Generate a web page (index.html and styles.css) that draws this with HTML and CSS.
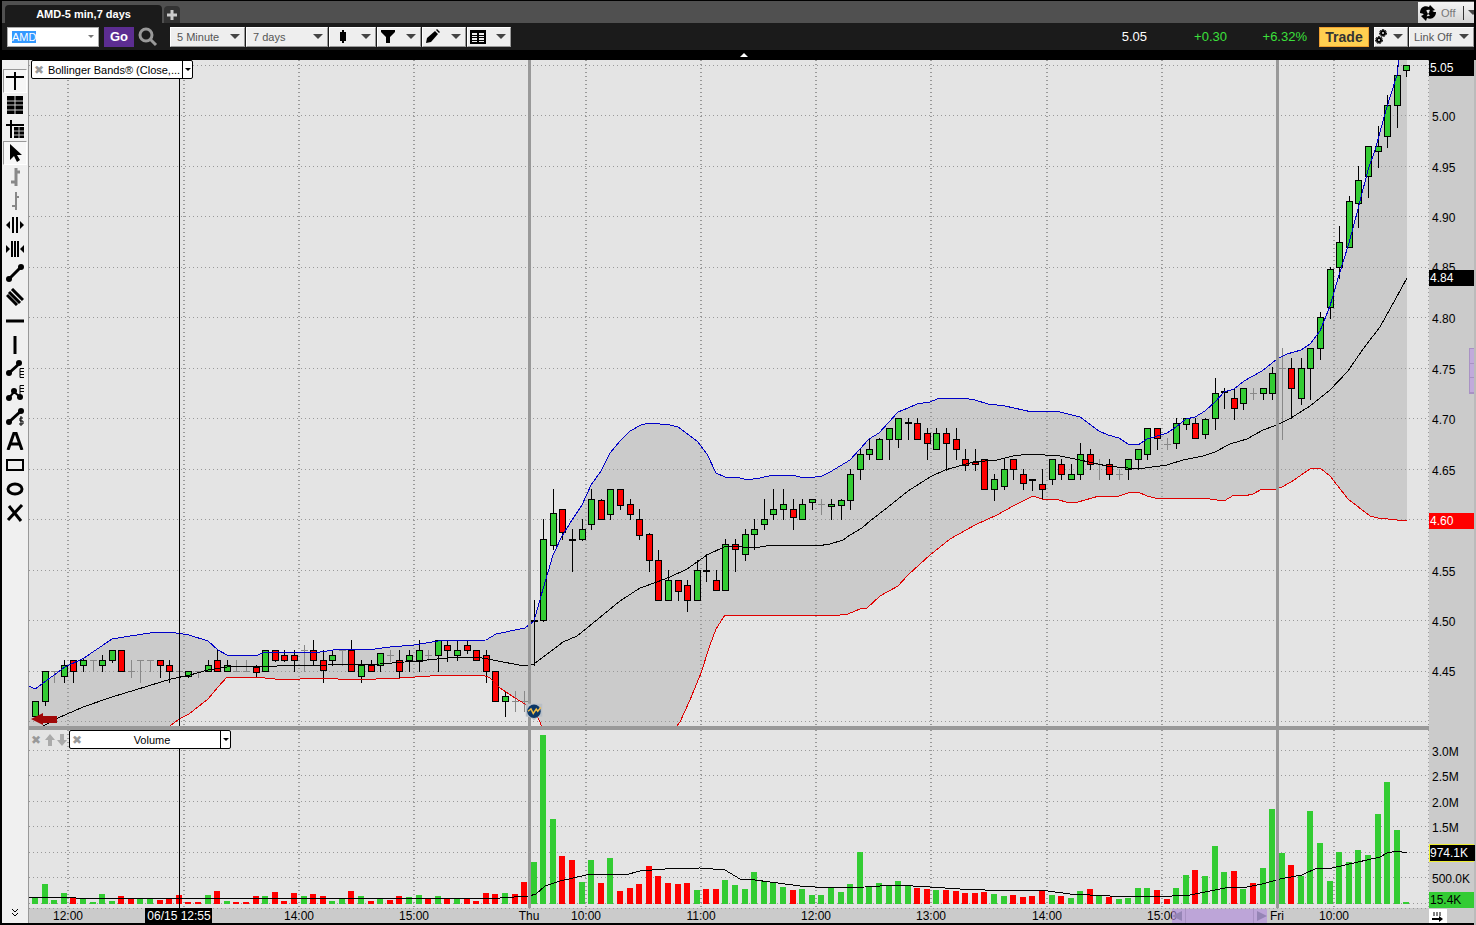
FILE: index.html
```html
<!DOCTYPE html>
<html lang="en">

<head>
    <meta charset="UTF-8">
    <meta name="viewport" content="width=device-width, initial-scale=1.0">
    <title>AMD-5 min,7 days</title>
    <link rel="stylesheet" href="styles.css">
</head>

<body>

    <header>
        <div class="tabs">
            <button class="tab">AMD-5 min,7 days</button>
            <button class="add-tab" aria-label="Add tab">
                <svg width="12" height="12"><path d="M6 1v10M1 6h10" stroke="#ccc" stroke-width="3"/></svg>
            </button>
            <button class="sync">
                <svg width="18" height="18" viewBox="0 0 18 18">
                    <path d="M1 9C1 4 5 1 10 3l1-2 5 5-6 2 1-2C8 5 6 7 5 10z"/>
                    <path d="M17 8c0 5-4 8-9 6l-1 3-5-5 6-3-1 3c3 1 5-1 6-4z"/>
                    <path d="M4 10l3-4 2 4 3-4 3 2-3 4-3-2-2 3z"/>
                </svg>
                <span>Off</span>
                <i></i>
                <b class="arrow"></b>
            </button>
        </div>

        <div class="toolbar">
            <div class="symbol">
                <input id="symbol" type="text" value="AMD" aria-label="Symbol">
                <b class="arrow small"></b>
            </div>
            <button class="go">Go</button>
            <button class="search" aria-label="Search">
                <svg width="20" height="20"><circle cx="8" cy="8" r="6" fill="none" stroke="#999" stroke-width="3"/><path d="M12 12l6 6" stroke="#999" stroke-width="3"/></svg>
            </button>

            <div class="picker interval">
                <select aria-label="Interval"><option>5 Minute</option></select>
                <b class="arrow"></b>
            </div>
            <div class="picker period">
                <select aria-label="Period"><option>7 days</option></select>
                <b class="arrow"></b>
            </div>
            <button class="tool wide" aria-label="Chart type">
                <svg width="16" height="16"><path d="M8 1v13" stroke="#000" stroke-width="2"/><path d="M5 3h6v9H5z"/></svg>
                <b class="arrow"></b>
            </button>
            <button class="tool" aria-label="Studies">
                <svg width="16" height="16"><path d="M1 1h14v2l-5 5v6H6V8L1 3z"/></svg>
                <b class="arrow"></b>
            </button>
            <button class="tool" aria-label="Draw">
                <svg width="16" height="16"><path d="M1 14l1-5 8-7 3 3-7 8zM11 1l1-1 3 3-1 1z"/></svg>
                <b class="arrow"></b>
            </button>
            <button class="tool" aria-label="Table view">
                <svg width="16" height="16"><path d="M0 1h16v14H0z"/><path d="M2 4h5v2H2zM9 4h5v2H9zM2 7h5v1H2zM9 7h5v1H9zM2 9h5v2H2zM9 9h5v2H9zM2 12h5v1H2zM9 12h5v1H9z" fill="#eee"/></svg>
                <b class="arrow"></b>
            </button>

            <div class="quote">
                <span class="last">5.05</span>
                <span class="up">+0.30</span>
                <span class="up">+6.32%</span>
            </div>
            <button class="trade">Trade</button>
            <button class="tool gear" aria-label="Settings">
                <svg width="14" height="16">
                    <g fill="none" stroke="#000"><circle cx="8" cy="4" r="2" stroke-width="2"/><circle cx="8" cy="4" r="3.500" stroke-dasharray="2 1"/>
                    <circle cx="4" cy="11" r="2" stroke-width="2"/><circle cx="4" cy="11" r="3.500" stroke-dasharray="2 1"/></g>
                </svg>
                <b class="arrow"></b>
            </button>
            <div class="picker link">
                <select aria-label="Link"><option>Link Off</option></select>
                <b class="arrow"></b>
            </div>
        </div>
        <button class="collapse" aria-label="Collapse"></button>
    </header>

    <main>
        <nav class="tools" id="tools"></nav>

        <section class="plot">
            <div class="pane price">
                <svg id="price" viewBox="29 60 1400 666" preserveAspectRatio="none"></svg>
                <div class="study">
                    <button class="close" aria-label="Remove study">✖</button>
                    <span>Bollinger Bands® (Close,...</span>
                    <button class="more" aria-label="Study options"></button>
                </div>
                <svg class="event" viewBox="0 0 24 24">
                    <path d="M1 1h22v17l-6 1-5 4-5-4-6-1z" fill="#b9bfc6"/>
                    <circle cx="12" cy="11" r="9" fill="#0c3767"/>
                    <path d="M4 11l4-3 3 6 4-6 2 3 4-5" fill="none" stroke="#f2bd45" stroke-width="2"/>
                </svg>
            </div>
            <div class="pane volume">
                <svg id="volume" viewBox="29 730 1400 178" preserveAspectRatio="none"></svg>
                <div class="pane-bar">
                    <button class="close" aria-label="Close pane">✖</button>
                    <button aria-label="Move up"><svg width="10" height="12"><path d="M5 0l5 6H7v6H3V6H0z" fill="#aaa"/></svg></button>
                    <button aria-label="Move down"><svg width="10" height="12"><path d="M5 12l5-6H7V0H3v6H0z" fill="#aaa"/></svg></button>
                    <div class="study">
                        <button class="close" aria-label="Remove study">✖</button>
                        <span>Volume</span>
                        <button class="more" aria-label="Study options"></button>
                    </div>
                </div>
            </div>
            <div class="times">
                <svg id="times"></svg>
                <div class="scroller"><b></b><i></i><b></b></div>
            </div>
        </section>

        <aside class="axis">
            <svg id="prices"></svg>
            <svg id="volumes"></svg>
            <div class="zoomer"><i></i><i></i><i></i></div>
            <button class="jump" aria-label="Jump to latest">
                <svg width="18" height="14"><path d="M5 3v4M8 3v4M11 3v4" stroke="#000"/><path d="M3 10h8" stroke="#000" stroke-width="2"/><path d="M10 7l4 3-4 3z"/></svg>
            </button>
        </aside>
    </main>

    <script src="chart.js"></script>

</body>

</html>
```
FILE: styles.css
```css
body {
    font-family: 'Liberation Sans', Arial, sans-serif;
    font-size: 11px;
    margin: 0;
    height: 100vh;
    display: flex;
    flex-direction: column;
    background-color: #000;
    overflow: hidden;
}

* {
    box-sizing: border-box;
}

button,
select,
input {
    font: inherit;
    color: inherit;
    margin: 0;
    padding: 0;
    border: none;
    border-radius: 0;
    background: none;
    appearance: none;
}

svg {
    display: block;
}

header {
    display: flex;
    flex-direction: column;
    height: 60px;
    padding: 1px 2px 0;
}

.tabs {
    display: flex;
    align-items: flex-end;
    height: 22px;
    padding-left: 3px;
    background-color: #505050;
}

.tab {
    width: 157px;
    height: 18px;
    border-radius: 4px 4px 0 0;
    background-color: #1b1b1b;
    color: #fff;
    font-weight: bold;
}

.add-tab {
    display: flex;
    align-items: center;
    justify-content: center;
    width: 16px;
    height: 17px;
    margin-left: 2px;
    border-radius: 4px 4px 0 0;
    background-color: #333;
}

.sync {
    display: flex;
    align-items: center;
    gap: 4px;
    width: 56px;
    height: 21px;
    margin-left: auto;
    padding-left: 1px;
    background-image: linear-gradient(#f4f4f4, #d4d4d4);
    color: #777;
    overflow: hidden;
}

.sync svg {
    flex: none;
}

.sync i {
    flex: none;
    width: 1px;
    height: 14px;
    margin-left: 4px;
    background-color: #333;
}

.arrow {
    flex: none;
    border: 5px solid transparent;
    border-top-color: #444;
    border-bottom: none;
    pointer-events: none;
}

.arrow.small {
    border-width: 3px;
    border-bottom: none;
    border-top-color: #777;
}

.toolbar {
    display: flex;
    align-items: center;
    height: 27px;
    padding-left: 5px;
    background-color: #1b1b1b;
}

.symbol {
    display: flex;
    align-items: center;
    width: 92px;
    height: 20px;
    padding: 0 4px;
    border: 1px solid #aaa;
    background-color: #fff;
}

.symbol input {
    flex: 1;
    min-width: 0;
    outline: none;
    font-size: 11px;
}

.symbol input::selection {
    background-color: #3399ff;
    color: #fff;
}

.go {
    width: 30px;
    height: 20px;
    margin-left: 5px;
    background-color: #5c2d91;
    color: #fff;
    font-size: 13px;
    font-weight: bold;
}

.search {
    margin: 0 12px 0 4px;
}

.picker,
.tool {
    display: flex;
    align-items: center;
    height: 20px;
    margin-right: 1px;
    padding: 0 4px 0 6px;
    border: 1px solid #fff;
    border-right-color: #999;
    border-bottom-color: #999;
    background-color: #eee;
    color: #555;
}

.picker select {
    flex: 1;
    width: 100%;
    min-width: 0;
}

.interval {
    width: 75px;
}

.period {
    width: 82px;
}

.tool {
    justify-content: space-between;
    width: 44px;
    padding-left: 2px;
}

.tool.wide {
    width: 47px;
    padding-left: 5px;
}

.tool.gear {
    width: 34px;
    margin-left: 5px;
    padding-left: 0;
}

.link {
    width: 65px;
    margin-right: 0;
    padding-left: 4px;
}

.quote {
    display: flex;
    justify-content: flex-end;
    flex: 1;
    color: #3ce03c;
    font-size: 13px;
}

.quote span {
    width: 80px;
    text-align: right;
}

.quote .last {
    color: #fff;
}

.trade {
    width: 50px;
    height: 20px;
    margin-left: 12px;
    border: 1px solid #f0a030;
    background-color: #ffcf50;
    color: #333;
    font-size: 14px;
    font-weight: bold;
}

.tabs,
.toolbar {
    flex: none;
}

.collapse {
    align-self: center;
    margin: 3px 0 0 12px;
    border: 4px solid transparent;
    border-top: none;
    border-bottom-color: #fff;
}

main {
    flex: 1;
    min-height: 0;
    display: grid;
    grid-template-columns: 27px 1fr 45px;
    padding: 0 0 2px 2px;
    border-right: 2px solid #bbb;
}

.tools {
    display: flex;
    flex-direction: column;
    padding-top: 9px;
    border-right: 1px solid #999;
    background-color: #f0f0f0;
}

.tools button {
    display: flex;
    align-items: center;
    justify-content: center;
    flex: none;
    height: 24px;
    margin: 0 1px;
    border: 1px solid transparent;
}

.tools button.on {
    border-color: #999 #fff #fff #999;
    background-color: #f7f7f7;
}

.tools .expand {
    height: 20px;
    margin-top: auto;
}

.plot {
    display: flex;
    flex-direction: column;
    min-width: 0;
}

.pane {
    position: relative;
    min-height: 0;
    overflow: hidden;
    background-color: #e4e4e4;
}

.pane > svg:first-child {
    width: 100%;
    height: 100%;
}

.price {
    flex: 666;
}

.volume {
    flex: 178;
    border-top: 4px solid #999;
    box-sizing: content-box;
}

.study {
    display: flex;
    align-items: center;
    width: 162px;
    height: 19px;
    border: 1px solid #000;
    border-radius: 2px;
    background-color: #fff;
    color: #000;
}

.study span {
    flex: 1;
    text-align: center;
    white-space: nowrap;
}

.price .study {
    position: absolute;
    left: 2px;
    top: 0;
}

.close {
    width: 14px;
    color: #999;
    font-family: 'DejaVu Sans', sans-serif;
    font-size: 12px;
}

.more {
    display: flex;
    align-items: center;
    justify-content: center;
    width: 10px;
    height: 100%;
    border-left: 1px solid #000;
}

.more::after {
    content: '';
    border: 3px solid transparent;
    border-top-color: #000;
    border-bottom: none;
}

.event {
    position: absolute;
    left: 36%;
    bottom: 4px;
    width: 18px;
    height: 20px;
    margin-left: -8px;
}

.pane-bar {
    position: absolute;
    left: 0;
    top: 0;
    display: flex;
    align-items: center;
    gap: 2px;
}

.times {
    position: relative;
    height: 15px;
    background-color: #cbcbcb;
}

.times > svg,
#prices,
#volumes {
    width: 100%;
    height: 100%;
    font-size: 12px;
}

.scroller {
    position: absolute;
    right: 162px;
    top: 1px;
    display: flex;
    align-items: center;
    width: 95px;
    height: 14px;
    background-color: rgba(180, 140, 225, 0.6);
}

.scroller i {
    flex: 1;
    height: 100%;
    margin: 0 3px;
    border: 1px solid #a992c4;
    border-width: 0 1px;
}

.scroller b {
    border: 5px solid transparent;
    border-right: 10px solid #9585b5;
    border-left: none;
}

.scroller b:last-child {
    border-right: none;
    border-left: 10px solid #9585b5;
}

.axis {
    position: relative;
    display: flex;
    flex-direction: column;
    min-height: 0;
    background-color: #cbcbcb;
}

#prices {
    flex: 666;
    min-height: 0;
}

#volumes {
    flex: 178;
    min-height: 0;
    margin-top: 4px;
    overflow: visible;
}

.zoomer {
    position: absolute;
    right: 0;
    top: 288px;
    display: flex;
    flex-direction: column;
    width: 5px;
    height: 46px;
    border: 1px solid #a992c4;
    border-right: none;
    background-color: #c1aadb;
}

.zoomer i {
    flex: 1;
    border-bottom: 1px solid #a992c4;
}

.jump {
    width: 18px;
    height: 14px;
    margin-top: 1px;
    background-color: #fff;
}

.grid-h {
    stroke: #999;
    stroke-dasharray: 1 3;
}

.grid-v {
    stroke: #999;
    stroke-dasharray: 1 3;
    stroke-width: 2;
}

.separator {
    stroke: #999;
    stroke-width: 3;
}

.cursor {
    stroke: #000;
}

.band {
    fill: #cbcbcb;
}

.line {
    fill: none;
    stroke: #000;
}

.upper {
    stroke: #0000c8;
}

.lower {
    stroke: #e00000;
}

.g {
    fill: #33cc33;
}

.r {
    fill: #ff0000;
}

.wick {
    stroke: #000;
}

.doji {
    stroke: #000;
    stroke-width: 2;
}

.flat {
    stroke: #888;
}

.body {
    stroke: #000;
}
```
FILE: chart.js
```js
const FIRST_X = 35;
const STEP = 9.59;

// type, high, top, bottom, low  (g up, r down, d doji, x unchanged)
const candles = `
g 701 701 716 716,g 671 671 701 705,x 671 671 671 682,g 660 665 676 682,r 660 660 671 682,g 659 660 665 671
x 660 660 660 671,g 655 660 665 671,g 650 650 660 662,r 650 650 671 671,x 660 671 671 677,x 660 660 660 682
x 660 660 660 671,r 660 660 665 677,r 660 665 671 682,x 671 671 671 672,g 671 671 676 677,x 671 671 671 677
g 660 665 671 671,r 650 660 671 671,g 660 665 671 671,x 660 671 671 671,x 660 671 671 671,r 665 667 672 677
g 650 650 671 671,r 650 650 660 661,r 650 655 660 661,r 650 655 660 671,x 645 650 650 671,r 640 650 660 665
r 650 660 670 682,g 650 655 660 665,x 650 650 650 665,r 640 650 671 671,g 660 665 676 682,r 660 665 671 671
g 653 653 665 671,x 650 655 655 661,r 650 660 671 677,g 650 655 660 671,g 640 650 661 671,x 650 655 655 660
g 640 640 655 671,r 640 645 650 661,g 640 650 655 660,r 640 645 650 653,r 650 650 660 660,r 650 655 671 682
r 671 671 701 701,g 692 696 701 716,x 691 701 701 711,x 691 701 701 711,d 600 621 621 665,g 519 539 620 621
g 489 513 545 549,r 509 509 532 539,d 529 540 540 571,g 519 529 539 540,g 489 499 524 529,r 499 500 519 519
g 489 489 514 519,r 489 489 505 509,r 499 504 514 519,r 509 519 535 539,r 533 534 560 571,r 550 560 600 600
g 570 580 600 600,r 580 580 591 600,r 580 585 600 611,g 560 570 600 600,d 554 571 571 581,r 570 580 590 590
g 539 544 590 590,r 539 544 549 571,g 529 534 554 560,g 519 529 534 549,g 499 519 524 529,g 489 509 514 519
g 489 504 509 519,r 499 509 517 529,g 499 504 519 519,g 499 499 502 509,x 499 504 504 514,g 499 504 506 519
g 499 500 505 519,g 469 474 500 509,g 449 454 469 479,g 439 449 454 459,g 438 439 459 459,g 428 428 439 459
g 418 418 439 447,d 418 423 423 439,r 418 423 439 439,r 428 433 443 459,g 428 433 449 449,r 428 433 443 470
r 428 439 449 459,r 449 459 465 470,r 449 462 464 470,r 459 459 489 489,g 474 479 489 500,g 459 469 486 489
r 459 459 469 479,r 469 474 483 489,d 480 480 480 490,r 469 484 489 499,g 459 459 479 484,r 459 464 474 479
g 464 474 479 479,g 443 454 474 479,r 449 454 464 469,x 459 464 464 479,r 459 464 474 479,x 469 474 474 479
g 459 459 469 479,g 449 449 459 469,g 428 428 454 459,r 428 428 438 449,x 438 444 444 449,g 418 423 443 448
g 418 418 424 429,r 418 423 438 438,g 418 419 434 438,g 378 393 418 429,d 388 392 392 408,r 389 398 408 419
g 388 388 403 409,x 388 393 393 399,g 388 388 393 399,g 367 373 393 399,x 348 368 368 439,r 358 368 388 418
g 358 368 398 404,g 348 348 368 399,g 312 317 348 359,g 267 269 307 318,g 226 242 267 278,g 196 201 247 247
g 166 180 203 227,g 146 146 176 197,g 126 146 151 167,g 95 105 136 147,g 65 75 105 127,g 65 65 70 76
`.trim().split(/[,\n]/).map(row => row.split(' '));

const upper = '29,686 35,689 65,667 84,658 112,639 130,636 150,633 170,632 189,635 208,641 218,650 227,655 258,655 265,652 320,652 340,649 375,649 390,647 414,645 438,641 486,640 496,634 525,628 534,621 543,589 553,555 562,536 572,520 582,505 591,485 601,471 610,453 620,441 630,431 641,425 649,423 670,425 678,427 697,441 707,454 716,473 725,477 737,477 747,480 760,478 773,475 783,476 793,475 803,478 815,477 822,476 830,472 850,460 869,439 879,433 898,412 908,408 917,404 930,402 937,399 945,398 962,398 975,400 988,404 1005,406 1032,412 1047,411 1060,412 1080,417 1099,431 1108,435 1119,438 1128,444 1138,445 1147,439 1167,433 1176,427 1186,419 1195,417 1205,411 1215,402 1224,392 1234,389 1244,381 1262,371 1277,359 1287,354 1301,350 1310,344 1320,331 1330,306 1339,275 1349,243 1358,209 1368,170 1376,147 1386,110 1397,75 1399,60 1407,20';
const lower = '29,760 160,735 170,726 179,719 189,714 208,699 218,687 227,677 255,677 275,679 300,679 323,678 353,680 400,678 445,675 483,675 490,678 500,688 515,698 525,704 534,711 540,722 545,735 670,735 680,722 690,700 701,673 710,645 716,629 725,615 735,616 760,615 777,616 800,615 820,615 833,616 848,614 860,609 867,608 880,596 898,586 908,575 930,555 950,539 975,525 997,515 1013,506 1033,496 1042,499 1055,499 1070,503 1078,502 1099,496 1119,496 1128,493 1138,492 1147,496 1155,498 1183,499 1197,498 1210,499 1224,501 1234,495 1244,496 1253,494 1262,489 1273,490 1282,487 1291,482 1310,469 1320,468 1330,476 1348,499 1370,516 1378,518 1407,521';
const middle = '29,733 43,726 58,718 83,707 112,697 171,679 190,675 208,670 227,667 328,665 380,664 417,661 447,658 477,657 493,660 524,666 534,664 563,642 577,636 587,628 620,601 640,588 657,582 670,577 687,569 707,555 724,547 733,546 743,547 760,547 773,545 793,545 817,546 830,544 843,540 850,535 862,528 870,521 888,507 908,491 930,477 945,470 963,465 973,462 997,460 1013,456 1030,454 1060,456 1080,460 1107,466 1138,469 1167,465 1183,460 1203,456 1215,452 1230,444 1247,439 1263,430 1277,425 1291,418 1310,406 1330,390 1348,371 1363,349 1380,327 1395,300 1407,278';

const volumeTops = `g898 g884 g900 g893 r898 g898 g902 g894 g901 r896 r899 g898 g898 r900 r899 r895 r902 r902 g895 r891 g901 r902 r902 r896 g896 r892
r901 r893 g896 r894 r896 g901 g899 r891 g896 r901 g899 r900 r896 g897 g895 r899 g896 r899 g898 r898 r901 r893 r894 g893 r894 r882
g862 g735 g819 r856 r860 g882 g860 r883 g858 r891 r888 r884 r866 r876 r883 r884 r883 g890 r889 r889 g880 g885 g889 g872 g881 g883
g887 r890 g889 g895 g895 g888 g892 g884 g852 g886 g883 g885 g881 g886 r888 r889 g890 r890 r891 r893 r893 r892 g894 g896 r895 r897
r896 r891 g895 r896 g898 g891 r889 g895 r897 g899 g898 g888 g888 r890 r899 g888 g875 r870 g876 g846 g872 r871 g889 r883 g868 g809
g853 r865 g876 g811 g843 g881 g852 g862 g850 g855 g814 g782 g830 g902`.split(/\s+/);
const volumeAverage = '29,897 68,897 76,898 180,898 330,898 500,898 529,896 536,894 545,886 560,881 586,875 605,874 625,875 640,871 665,869 700,868 725,870 740,879 755,880 800,886 830,888 865,887 895,885 930,887 960,889 1010,891 1040,890 1070,894 1110,896 1172,896 1190,895 1215,890 1230,887 1247,887 1262,884 1280,879 1302,875 1317,868 1332,868 1380,857 1387,853 1397,851 1407,853';

const hours = [68, 184, 299, 414, 586, 701, 816, 931, 1047, 1162, 1334];
const days = [529, 1277];
const priceLines = [65, 115, 166, 216, 267, 317, 368, 418, 469, 519, 570, 620, 671, 721];
const volumeLines = [750, 775, 801, 826, 852, 877, 903];

const line = (cls, x1, y1, x2, y2) => `<path class="${cls}" d="M${x1} ${y1}L${x2} ${y2}"/>`;

function grid(rows, top, bottom) {
    return rows.map(y => line('grid-h', 29, y + 0.5, 1429, y + 0.5)).join('')
        + hours.map(x => line('grid-v', x, top, x, bottom)).join('')
        + line('grid-v', 1429, top, 1429, bottom);
}

function overlays(top, bottom) {
    return days.map(x => line('separator', x + 0.5, top, x + 0.5, bottom)).join('')
        + line('cursor', 179.5, top, 179.5, bottom);
}

function candle([type, high, top, bottom, low], i) {
    const x = Math.round(FIRST_X + i * STEP);
    top = Number(top);
    bottom = Number(bottom);
    if (type === 'x' || type === 'd') {
        const cls = type === 'x' ? 'flat' : 'wick';
        const bar = type === 'x' ? 'flat' : 'doji';
        const y = type === 'x' ? top + 0.5 : top;
        return line(cls, x + 0.5, high, x + 0.5, Number(low) + 1) + line(bar, x - 3, y, x + 4, y);
    }
    return line('wick', x + 0.5, high, x + 0.5, Number(low) + 1)
        + `<rect class="body ${type}" x="${x - 2.5}" y="${top + 0.5}" width="6" height="${bottom - top}"/>`;
}

function drawPrice() {
    const band = upper + ' ' + lower.split(' ').reverse().join(' ');
    document.getElementById('price').innerHTML = `<g shape-rendering="crispEdges">
        <polygon class="band" points="${band}"/>
        ${grid(priceLines, 60, 726)}
        ${candles.map(candle).join('')}
        <polyline class="line" points="${middle}"/>
        <polyline class="line upper" points="${upper}"/>
        <polyline class="line lower" points="${lower}"/>
        ${overlays(60, 726)}
    </g>
    <path d="M31 719L43 713V716H57V723H43V725Z" fill="#a00808"/>`;
}

function drawVolume() {
    const bars = volumeTops.map((v, i) => {
        const x = Math.round(FIRST_X + i * STEP) - 3;
        const top = Number(v.slice(1));
        return `<rect class="${v[0]}" x="${x}" y="${top}" width="6" height="${904 - top}"/>`;
    });
    document.getElementById('volume').innerHTML = `<g shape-rendering="crispEdges">
        ${grid(volumeLines, 730, 908)}
        ${bars.join('')}
        <polyline class="line" points="${volumeAverage}"/>
        ${overlays(730, 908)}
    </g>`;
}

// labels keep their own size, only their position follows the pane
function axisLabels(id, top, height, labels, tags) {
    const at = y => ((y - top) / height * 100) + '%';
    document.getElementById(id).innerHTML =
        labels.map(([text, y]) => `<text x="3" y="${at(y + 5)}">${text}</text>`).join('')
        + tags.map(([text, y, fill, color, edge]) => `<svg y="${at(y)}" overflow="visible" shape-rendering="crispEdges">
            ${edge ? `<rect y="-1" width="45" height="18" fill="${edge}"/>` : ''}
            <rect x="${edge ? 1 : 0}" width="45" height="16" fill="${fill}"/>
            <text x="1" y="12" fill="${color}">${text}</text></svg>`).join('');
}

function drawTimes() {
    const at = x => ((x - 29) / 1400 * 100) + '%';
    const labels = [['12:00', 68], ['14:00', 299], ['15:00', 414], ['Thu', 529], ['10:00', 586], ['11:00', 701],
        ['12:00', 816], ['13:00', 931], ['14:00', 1047], ['15:00', 1162], ['Fri', 1277], ['10:00', 1334]];
    document.getElementById('times').innerHTML = '<path class="grid-h" d="M0 .5H4000"/>'
        + labels.map(([text, x]) => `<text x="${at(x)}" y="12" text-anchor="middle">${text}</text>`).join('')
        + `<svg x="${at(179)}" overflow="visible"><rect x="-34" width="67" height="15"/>
            <text y="12" fill="#fff" text-anchor="middle">06/15 12:55</text></svg>`;
}

const icons = [
    '<path d="M9 0v18M0 5h18" stroke="#000" stroke-width="2"/>',
    '<path d="M1 0h16v18H1z"/><path d="M1 5h16M1 9h16M1 14h16M9 0v18" stroke="#ccc"/>',
    '<path d="M5 0v18M0 5h18" stroke="#000" stroke-width="2"/><path d="M8 7h10v11H8z"/><path d="M8 11h10M8 15h10M13 7v11" stroke="#bbb"/>',
    '<path d="M4 0v16l4-4 3 6 3-2-3-5h5z"/>',
    '<path d="M10 0v18M10 4h4M5 14h5" stroke="#888" stroke-width="3"/>',
    '<path d="M10 0v18M10 5h3M6 14h4" stroke="#888" stroke-width="2"/>',
    '<path d="M7 1v16M11 1v16" stroke="#000" stroke-width="2"/><path d="M0 9l4-4v8zM18 9l-4-4v8z"/>',
    '<path d="M6 1v16M9 1v16M12 1v16" stroke="#000" stroke-width="2"/><path d="M4 9L0 5v8zM14 9l4-4v8z"/>',
    '<path d="M3 15L15 3" stroke="#000" stroke-width="3"/><circle cx="3" cy="15" r="3"/><circle cx="15" cy="3" r="3"/>',
    '<path d="M6 1l11 11M3 4l11 11M1 7l10 10" stroke="#000" stroke-width="3"/>',
    '<path d="M0 9h18" stroke="#000" stroke-width="3"/>',
    '<path d="M9 0v18" stroke="#000" stroke-width="3"/>',
    '<path d="M3 13L13 4" stroke="#000" stroke-width="3"/><circle cx="3" cy="13" r="3"/><circle cx="13" cy="3" r="3"/><path d="M18 8.500h-4v9h4M14 11.500h4M14 14.500h4" fill="none" stroke="#000"/>',
    '<path d="M2 15l6-7 5 4" fill="none" stroke="#000" stroke-width="2"/><circle cx="3" cy="14" r="3"/><circle cx="8" cy="7" r="3"/><circle cx="14" cy="13" r="3"/><path d="M18 1.500h-4v9M14 4.500h4M14 7.500h4" fill="none" stroke="#000" stroke-width="1"/>',
    '<path d="M3 14L15 3" stroke="#000" stroke-width="3"/><circle cx="3" cy="14" r="3"/><circle cx="15" cy="3" r="3"/><path d="M17 10h-3v3h3v3h-4M15 8v10" fill="none" stroke="#000"/>',
    '<path d="M2 18L8 1h2l6 17M4 12h10" fill="none" stroke="#000" stroke-width="3"/>',
    '<path d="M1 4h16v10H1z" fill="none" stroke="#000" stroke-width="2"/>',
    '<ellipse cx="9" cy="9" rx="7" ry="5" fill="none" stroke="#000" stroke-width="3"/>',
    '<path d="M3 2l12 15M16 1L2 16" stroke="#000" stroke-width="3"/>'
];
const names = ['Crosshair', 'Grid', 'Crosshair data', 'Pointer', 'Bar', 'Thin bar', 'Widen', 'Narrow', 'Trend line',
    'Parallel lines', 'Horizontal line', 'Vertical line', 'Retracement', 'Extension', 'Price line', 'Text', 'Rectangle', 'Ellipse', 'Delete'];

document.getElementById('tools').innerHTML = icons.map((icon, i) =>
    `<button aria-label="${names[i]}" class="${i === 0 || i === 3 ? 'on' : ''}"><svg width="18" height="18">${icon}</svg></button>`
).join('') + '<button class="expand" aria-label="More tools"><svg width="8" height="10"><path d="M1 1l3 3 3-3M1 5l3 3 3-3" fill="none" stroke="#000"/></svg></button>';

drawPrice();
drawVolume();
drawTimes();
axisLabels('prices', 60, 666,
    [['5.00', 116], ['4.95', 167], ['4.90', 217], ['4.85', 267], ['4.80', 318], ['4.75', 369], ['4.70', 419],
        ['4.65', 470], ['4.55', 571], ['4.50', 621], ['4.45', 671]],
    [['5.05', 60, '#000', '#fff'], ['4.84', 270, '#000', '#fff'], ['4.60', 513, '#ff0000', '#fff']]);
axisLabels('volumes', 730, 178,
    [['3.0M', 751], ['2.5M', 776], ['2.0M', 802], ['1.5M', 827], ['500.0K', 878]],
    [['974.1K', 845, '#000', '#fff', '#ee3'], ['15.4K', 892, '#33cc33', '#000']]);

document.getElementById('symbol').select();
```
